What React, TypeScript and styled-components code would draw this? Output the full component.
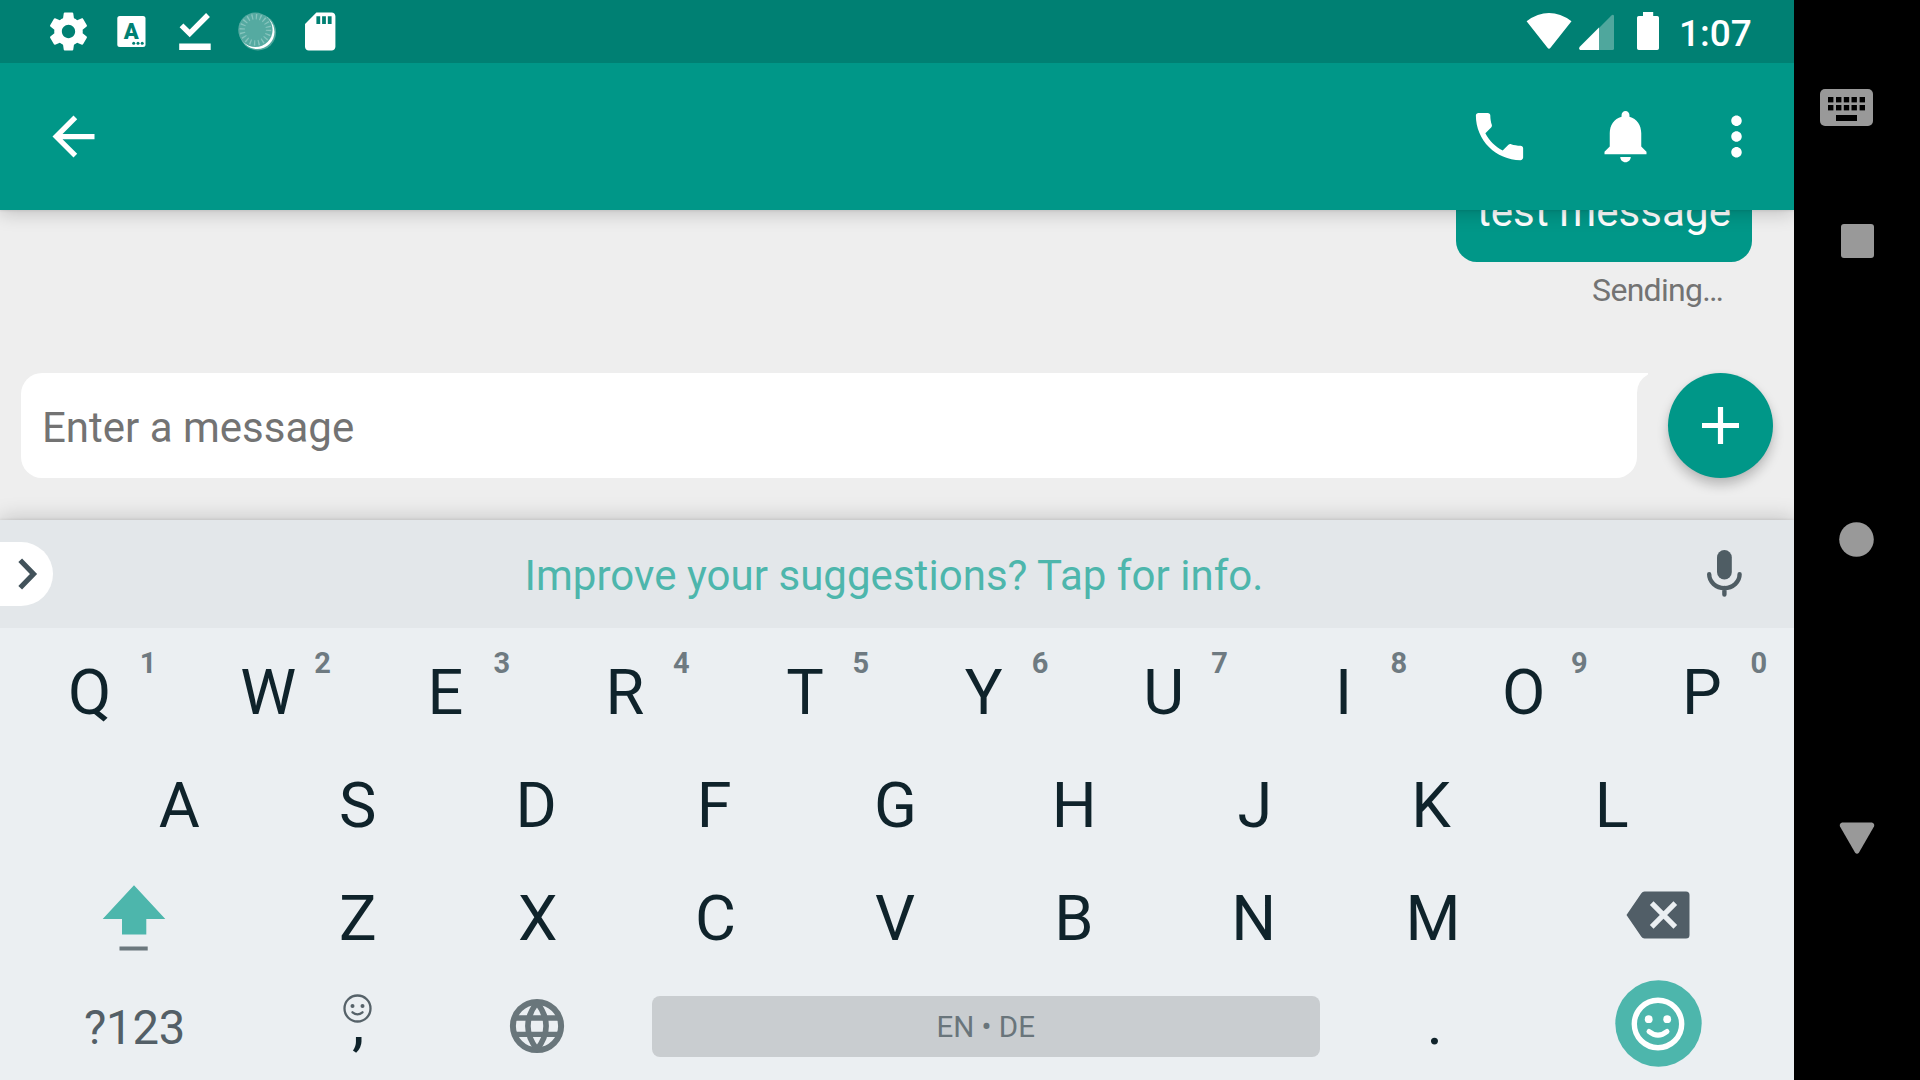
import React from "react";
import styled, { createGlobalStyle } from "styled-components";

const GlobalStyle = createGlobalStyle`
  * { box-sizing: border-box; }
  html, body { margin: 0; padding: 0; }
  body {
    background: #000;
    font-family: Roboto, "Noto Sans", sans-serif;
    overflow: hidden;
  }
`;

const Device = styled.div`
  display: flex;
  width: 1920px;
  height: 1080px;
  background: #000;
  overflow: hidden;
`;

const Screen = styled.div`
  display: flex;
  flex-direction: column;
  width: 1794px;
  height: 1080px;
  overflow: hidden;
  background: #eeeeee;
`;

const Svg = styled.svg`
  display: block;
  flex: none;
`;

/* Status bar */
const StatusBar = styled.header`
  position: relative;
  z-index: 2;
  display: flex;
  justify-content: space-between;
  height: 63px;
  flex: none;
  background: #008073;
`;

const StatusGroup = styled.div`
  display: flex;
  align-items: center;
`;

const Clock = styled.span`
  width: 116px;
  padding: 4px 0 0 1px;
  font-size: 37px;
  font-weight: 500;
  line-height: 43px;
  color: #fff;
`;

/* App bar */
const AppBar = styled.nav`
  position: relative;
  z-index: 1;
  display: flex;
  align-items: center;
  justify-content: space-between;
  height: 147px;
  flex: none;
  padding: 0 26px 0 42px;
  background: #009788;
  box-shadow: 0 1px 2px rgba(0, 0, 0, 0.07), 0 3px 18px rgba(0, 0, 0, 0.2);
`;

const Actions = styled.div`
  display: flex;
  align-items: center;
`;

const IconButton = styled.button<{ $gap?: number }>`
  display: block;
  margin: 0 0 0 ${(p) => p.$gap ?? 0}px;
  padding: 0;
  border: 0;
  background: none;
`;

/* Conversation */
const Conversation = styled.main`
  display: flex;
  flex-direction: column;
  flex: none;
  height: 310px;
`;

const MessageList = styled.div`
  display: flex;
  flex-direction: column;
  align-items: flex-end;
  height: 163px;
  padding-right: 42px;
`;

const Bubble = styled.div`
  display: flex;
  align-items: center;
  justify-content: center;
  flex: none;
  width: 296px;
  height: 101px;
  margin-top: -49px;
  border-radius: 21px;
  background: #009788;
  color: #fff;
  font-size: 42px;
  letter-spacing: 0.1px;
  white-space: nowrap;
`;

const MessageStatus = styled.div`
  margin: 10px 29px 0 0;
  font-size: 32px;
  line-height: 37px;
  letter-spacing: -0.7px;
  color: #737373;
`;

const Composer = styled.div`
  display: flex;
  justify-content: space-between;
  padding: 0 21px;
`;

const MessageField = styled.div`
  position: relative;
  display: flex;
  align-items: center;
  width: 1616px;
  height: 105px;
  padding: 3px 21px 0;
  border-radius: 21px 0 21px 21px;
  background: #fff;
  color: #737373;
  font-size: 42px;
`;

const FieldTail = styled.svg`
  position: absolute;
  top: 0;
  left: 100%;
`;

const Fab = styled.button`
  display: flex;
  align-items: center;
  justify-content: center;
  width: 105px;
  height: 105px;
  padding: 0;
  border: 0;
  border-radius: 50%;
  background: #009788;
  box-shadow: 0 7px 12px rgba(0, 0, 0, 0.22), 0 0 4px rgba(0, 0, 0, 0.05);
`;

/* Keyboard */
const Keyboard = styled.section`
  position: relative;
  display: flex;
  flex-direction: column;
  height: 560px;
  background: #ebeff2;
  box-shadow: 0 0 3px rgba(0, 0, 0, 0.12), 0 -2px 20px rgba(0, 0, 0, 0.18);
`;

const SuggestionStrip = styled.div`
  display: flex;
  align-items: center;
  justify-content: space-between;
  height: 108px;
  padding-right: 38px;
  background: #e3e7ea;
`;

const ExpandPill = styled.button`
  display: flex;
  align-items: center;
  width: 53px;
  height: 64px;
  margin-top: -1px;
  padding: 0 0 0 18px;
  border: 0;
  border-radius: 0 32px 32px 0;
  background: #fff;
`;

const Suggestion = styled.span`
  padding: 3px 0 0 43px;
  font-size: 42px;
  letter-spacing: 0.04px;
  color: #4db6ac;
`;

const KeyRow = styled.div<{ $inset?: boolean }>`
  display: flex;
  height: 113px;
  padding: 0 ${(p) => (p.$inset ? 89.7 : 0)}px;
`;

const Key = styled.div<{ $span?: number; $drop?: number }>`
  position: relative;
  display: flex;
  align-items: center;
  justify-content: center;
  flex: ${(p) => p.$span ?? 1} 1 0;
  min-width: 0;
  padding-top: ${(p) => p.$drop ?? 0}px;
`;

/* Icons and plates sit a hair left of the key's centre line. */
const KeyFace = styled.div`
  margin-right: 2px;
`;

const Letter = styled.span<{ $bearing: number }>`
  padding: 16px ${(p) => p.$bearing * 2}px 0 0;
  font-size: 63px;
  line-height: 74px;
  color: #0f232b;
`;

const Hint = styled.span<{ $right: number }>`
  position: absolute;
  top: 18px;
  right: ${(p) => p.$right}px;
  font-size: 29px;
  font-weight: 700;
  line-height: 34px;
  color: #6e7a81;
`;

const SymbolLabel = styled.span`
  padding-top: 8px;
  font-size: 47.2px;
  letter-spacing: -0.2px;
  color: #535f67;
`;

const PunctuationKey = styled(Key)`
  flex-direction: column;
  justify-content: flex-start;
`;

const Punctuation = styled.span<{ $top: number }>`
  margin: ${(p) => p.$top}px 1px 0 0;
  font-size: 63px;
  line-height: 74px;
  color: #0f232b;
`;

const SmileyHint = styled.div`
  height: 28px;
  margin: 27px 2px 0 0;
`;

const SpaceBar = styled.div`
  display: flex;
  align-items: center;
  justify-content: center;
  width: 668px;
  height: 61px;
  border-radius: 8px;
  background: #c9cdd0;
  font-size: 29.5px;
  color: #69757b;
`;

/* System navigation */
const SystemNav = styled.aside`
  display: flex;
  flex-direction: column;
  align-items: center;
  width: 126px;
  height: 1080px;
  background: #000;
`;

const NavItem = styled.div<{ $top: number; $left?: number }>`
  margin: ${(p) => p.$top}px 0 0 ${(p) => p.$left ?? 0}px;
`;

type Glyph = { d: string; size?: number; color?: string };

const MaterialIcon = ({ d, size = 63, color = "#fff" }: Glyph) => (
  <Svg width={size} height={size} viewBox="0 0 24 24" fill={color}>
    <path d={d} />
  </Svg>
);

const PATHS = {
  back: "M20 11H7.83l5.59-5.59L12 4l-8 8 8 8 1.41-1.41L7.83 13H20v-2z",
  call: "M6.62 10.79c1.44 2.83 3.76 5.14 6.59 6.59l2.2-2.2c.27-.27.67-.36 1.02-.24 1.12.37 2.33.57 3.57.57.55 0 1 .45 1 1V20c0 .55-.45 1-1 1-9.39 0-17-7.61-17-17 0-.55.45-1 1-1h3.5c.55 0 1 .45 1 1 0 1.25.2 2.45.57 3.57.11.35.03.74-.25 1.02l-2.2 2.2z",
  bell: "M12 21.8c1.1 0 2-.9 2-2h-4c0 1.1.89 2 2 2zm6-6v-5c0-3.07-1.64-5.64-4.5-6.32V3.8c0-.83-.67-1.5-1.5-1.5s-1.5.67-1.5 1.5v.68C7.63 5.16 6 7.72 6 10.8v5l-2 2v1h16v-1l-2-2z",
  more: "M12 8c1.1 0 2-.9 2-2s-.9-2-2-2-2 .9-2 2 .9 2 2 2zm0 2c-1.1 0-2 .9-2 2s.9 2 2 2 2-.9 2-2-.9-2-2-2zm0 6c-1.1 0-2 .9-2 2s.9 2 2 2 2-.9 2-2-.9-2-2-2z",
  gear: "M19.43 12.98c.04-.32.07-.64.07-.98s-.03-.66-.07-.98l2.11-1.65c.19-.15.24-.42.12-.64l-2-3.46c-.12-.22-.39-.3-.61-.22l-2.49 1c-.52-.4-1.08-.73-1.69-.98l-.38-2.65C14.46 2.18 14.25 2 14 2h-4c-.25 0-.46.18-.49.42l-.38 2.65c-.61.25-1.17.59-1.69.98l-2.49-1c-.23-.09-.49 0-.61.22l-2 3.46c-.13.22-.07.49.12.64l2.11 1.65c-.04.32-.07.65-.07.98s.03.66.07.98l-2.11 1.65c-.19.15-.24.42-.12.64l2 3.46c.12.22.39.3.61.22l2.49-1c.52.4 1.08.73 1.69.98l.38 2.65c.03.24.24.42.49.42h4c.25 0 .46-.18.49-.42l.38-2.65c.61-.25 1.17-.59 1.69-.98l2.49 1c.23.09.49 0 .61-.22l2-3.46c.12-.22.07-.49-.12-.64l-2.11-1.65zM12 15.5c-1.93 0-3.5-1.57-3.5-3.5s1.57-3.5 3.5-3.5 3.5 1.57 3.5 3.5-1.57 3.5-3.5 3.5z",
};

const StatusIcons = () => (
  <Svg width="340" height="63" viewBox="0 0 340 63" fill="#fff">
    <g transform="translate(45.7 8.7) scale(1.9)">
      <path d={PATHS.gear} />
    </g>
    <rect x="117.3" y="16" width="28.2" height="31" rx="2.5" />
    <text
      x="131.3"
      y="39"
      textAnchor="middle"
      fontFamily="Roboto, sans-serif"
      fontSize="22"
      fontWeight="900"
      fill="#008073"
    >
      A
    </text>
    <g fill="#008073">
      <circle cx="133.7" cy="43.2" r="1.5" />
      <circle cx="138" cy="43.2" r="1.5" />
      <circle cx="142.2" cy="43.2" r="1.5" />
    </g>
    <path d="M181.5 25.3l8.2 8.1L208 15" fill="none" stroke="#fff" strokeWidth="5.4" />
    <rect x="179.2" y="43.5" width="31.5" height="6.5" />
    <circle cx="257.8" cy="32.2" r="18.3" fill="#4fa79d" />
    <circle cx="257.2" cy="31.8" r="17.3" />
    <circle cx="255.4" cy="29.8" r="17.2" fill="#55aaa1" />
    <circle
      cx="255.4"
      cy="29.8"
      r="13.2"
      fill="none"
      stroke="#86c4bd"
      strokeWidth="5.4"
      strokeDasharray="1.3 2.847"
    />
    <path
      transform="translate(297.4 8.7) scale(1.9)"
      d="M18 2h-8L4.02 8 4 20c0 1.1.9 2 2 2h12c1.1 0 2-.9 2-2V4c0-1.1-.9-2-2-2zm-6 6h-2V4h2v4zm3 0h-2V4h2v4zm3 0h-2V4h2v4z"
    />
  </Svg>
);

const SignalIcons = () => (
  <Svg width="152" height="63" viewBox="1526 0 152 63" fill="#fff">
    <path d="M1526.6 21.2Q1549 5 1571.5 21.2L1550.5 47.7Q1549 49.8 1547.5 47.7z" />
    <path d="M1599 28v22h13.5q1.5 0 1.5-1.5V16q-.6-2.4-2.6-.6z" fill="#4fa79d" />
    <path d="M1599 27.5V50h-19q-1.6-1.2-.5-3z" />
    <path d="M1643 12h10.2v4h4q1.8 0 1.8 1.8v30.4q0 1.8-1.8 1.8h-18.4q-1.8 0-1.8-1.8V17.8q0-1.8 1.8-1.8h4.2z" />
  </Svg>
);

const Mic = () => (
  <Svg width="64" height="64" viewBox="1692 542 64 64">
    <rect x="1717" y="550" width="14.8" height="29.5" rx="7.4" fill="#4f5d64" />
    <path
      d="M1709.2 574.3a15.2 13.8 0 0 0 30.4 0M1724.4 588v6.6"
      fill="none"
      stroke="#4f5d64"
      strokeWidth="4.4"
      strokeLinecap="round"
    />
  </Svg>
);

const Shift = () => (
  <Svg width="64" height="70" viewBox="102.5 882.5 64 70">
    <path d="M134.5 885.8L165.8 919.5H146.8V935H122.5V919.5H103.2z" fill="#4db6ac" />
    <rect x="120" y="947" width="28.2" height="4" fill="#6b777d" />
  </Svg>
);

const Backspace = () => (
  <Svg width="64" height="50" viewBox="1626.5 890.5 64 50">
    <path
      d="M1645 892h41.5q3.5 0 3.5 3.5v40q0 3.5-3.5 3.5H1645q-2 0-3.3-2L1627 915.5l14.7-21.5q1.3-2 3.3-2z"
      fill="#515e67"
    />
    <path d="M1652.2 903.7l23.6 23.6m0-23.6l-23.6 23.6" stroke="#ebeff2" strokeWidth="5.2" />
  </Svg>
);

const SmallSmiley = () => (
  <Svg width="29" height="29" viewBox="0 0 29 29" fill="#566269">
    <circle cx="14.5" cy="14.5" r="13" fill="none" stroke="#566269" strokeWidth="2.3" />
    <circle cx="9.5" cy="12" r="2" />
    <circle cx="19.5" cy="12" r="2" />
    <path d="M9.5 18.3q5 4.2 10 0" fill="none" stroke="#566269" strokeWidth="2.3" strokeLinecap="round" />
  </Svg>
);

const Globe = () => (
  <Svg width="56" height="56" viewBox="-28 -28 56 56" fill="none" stroke="#69767b" strokeWidth="6">
    <circle r="24.1" />
    <path d="M-23-8H23M-23 8.3H23" strokeWidth="5.3" />
    <path d="M0-23.5C-12-8-12 8 0 23.5C12 8 12-8 0-23.5z" strokeWidth="5.5" strokeLinejoin="bevel" />
  </Svg>
);

const EmojiButton = () => (
  <Svg width="87" height="87" viewBox="-43.5 -43.5 87 87" fill="#fff">
    <circle r="43.2" fill="#4db6ac" />
    <circle cx="-.5" cy=".5" r="23.7" fill="none" stroke="#fff" strokeWidth="5.4" />
    <circle cx="-9.8" cy="-4.3" r="3.9" />
    <circle cx="8.7" cy="-4.3" r="3.9" />
    <path d="M-9.5 8Q-.5 15.3 8.5 8" fill="none" stroke="#fff" strokeWidth="5" strokeLinecap="round" />
  </Svg>
);

const KeyboardSwitch = () => (
  <Svg width="53" height="37" viewBox="0 0 53 37">
    <rect width="53" height="37" rx="5" fill="#999" />
    {[8, 16].map((y) =>
      [8, 16, 23.8, 31.5, 39.6].map((x) => <rect key={`${x}-${y}`} x={x} y={y} width="5.4" height="5.4" />)
    )}
    <rect x="16" y="26" width="21" height="6" />
  </Svg>
);

const TOP_ROW = "QWERTYUIOP".split("");
const HOME_ROW = "ASDFGHJKL".split("");
const LOWER_ROW = "ZXCVBNM".split("");

const BEARINGS: Record<string, number> = {
  Q: 0, W: 1, E: 3, R: 3, T: 2.4, Y: 3, U: 2.5, I: 2, O: 1.2, P: 2.5,
  A: 0, S: 1, D: 2, F: 3.5, G: 1.5, H: 2.2, J: 1, K: 4.2, L: 3,
  Z: 1, X: 0.5, C: 2, V: 2, B: 2.6, N: 2, M: 2.2,
};

const HINT_RIGHT: Record<number, number> = { 1: 23, 9: 27, 0: 27 };

const LetterKey = ({ letter, hint }: { letter: string; hint?: number }) => (
  <Key>
    <Letter $bearing={BEARINGS[letter]}>{letter}</Letter>
    {hint !== undefined && <Hint $right={HINT_RIGHT[hint] ?? 28}>{hint}</Hint>}
  </Key>
);

export default function App() {
  return (
    <Device>
      <GlobalStyle />
      <Screen>
        <StatusBar>
          <StatusIcons />
          <StatusGroup>
            <SignalIcons />
            <Clock>1:07</Clock>
          </StatusGroup>
        </StatusBar>

        <AppBar>
          <IconButton aria-label="Back">
            <MaterialIcon d={PATHS.back} />
          </IconButton>
          <Actions>
            <IconButton aria-label="Call">
              <MaterialIcon d={PATHS.call} />
            </IconButton>
            <IconButton aria-label="Notifications" $gap={63}>
              <MaterialIcon d={PATHS.bell} />
            </IconButton>
            <IconButton aria-label="More" $gap={48}>
              <MaterialIcon d={PATHS.more} />
            </IconButton>
          </Actions>
        </AppBar>

        <Conversation>
          <MessageList>
            <Bubble>test message</Bubble>
            <MessageStatus>Sending…</MessageStatus>
          </MessageList>
          <Composer>
            <MessageField>
              Enter a message
              <FieldTail width="11" height="21" viewBox="0 0 11 21">
                <path d="M0 0H11V1.5Q0 7.5 0 20z" fill="#fff" />
              </FieldTail>
            </MessageField>
            <Fab aria-label="Add">
              <Svg width="37" height="37" viewBox="0 0 37 37" stroke="#fff" strokeWidth="5.2">
                <path d="M18.5 0v37M0 18.5h37" />
              </Svg>
            </Fab>
          </Composer>
        </Conversation>

        <Keyboard>
          <SuggestionStrip>
            <ExpandPill aria-label="Expand">
              <Svg width="20" height="32" viewBox="0 0 20 32">
                <path d="M2.2 2.2L15.5 16 2.2 29.8" fill="none" stroke="#42525a" strokeWidth="5.2" />
              </Svg>
            </ExpandPill>
            <Suggestion>Improve your suggestions? Tap for info.</Suggestion>
            <Mic />
          </SuggestionStrip>

          <KeyRow>
            {TOP_ROW.map((letter, i) => (
              <LetterKey key={letter} letter={letter} hint={(i + 1) % 10} />
            ))}
          </KeyRow>
          <KeyRow $inset>
            {HOME_ROW.map((letter) => (
              <LetterKey key={letter} letter={letter} />
            ))}
          </KeyRow>
          <KeyRow>
            <Key $span={1.5} $drop={13}>
              <KeyFace>
                <Shift />
              </KeyFace>
            </Key>
            {LOWER_ROW.map((letter) => (
              <LetterKey key={letter} letter={letter} />
            ))}
            <Key $span={1.5} $drop={9}>
              <KeyFace>
                <Backspace />
              </KeyFace>
            </Key>
          </KeyRow>
          <KeyRow>
            <Key $span={1.5}>
              <SymbolLabel>?123</SymbolLabel>
            </Key>
            <PunctuationKey>
              <SmileyHint>
                <SmallSmiley />
              </SmileyHint>
              <Punctuation $top={-36}>,</Punctuation>
            </PunctuationKey>
            <Key $drop={5}>
              <KeyFace>
                <Globe />
              </KeyFace>
            </Key>
            <Key $span={4} $drop={6}>
              <KeyFace>
                <SpaceBar>EN • DE</SpaceBar>
              </KeyFace>
            </Key>
            <PunctuationKey>
              <Punctuation $top={19}>.</Punctuation>
            </PunctuationKey>
            <Key $span={1.5}>
              <KeyFace>
                <EmojiButton />
              </KeyFace>
            </Key>
          </KeyRow>
        </Keyboard>
      </Screen>

      <SystemNav>
        <NavItem $top={89} $left={-21}>
          <KeyboardSwitch />
        </NavItem>
        <NavItem $top={98} $left={1}>
          <Svg width="33" height="34">
            <rect width="33" height="34" rx="3" fill="#999" />
          </Svg>
        </NavItem>
        <NavItem $top={264} $left={-1}>
          <Svg width="35" height="35">
            <circle cx="17.5" cy="17.5" r="17.3" fill="#999" />
          </Svg>
        </NavItem>
        <NavItem $top={265}>
          <Svg width="36" height="33" viewBox="0 0 36 33">
            <path d="M3 .5H33Q36 1.5 35 4.5L20 30.5Q18 33 16 30.5L1 4.5Q0 1.5 3 .5z" fill="#999" />
          </Svg>
        </NavItem>
      </SystemNav>
    </Device>
  );
}
